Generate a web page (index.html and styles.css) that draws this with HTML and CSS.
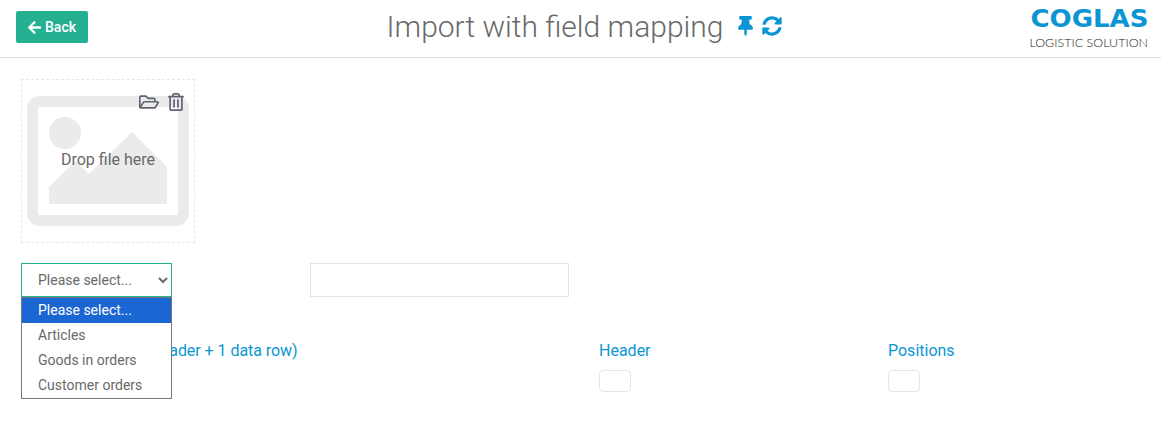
FILE: index.html
```html
<!DOCTYPE html>
<html lang="en">
<head>
    <meta charset="UTF-8">
    <meta name="viewport" content="width=device-width, initial-scale=1.0">
    <title>Import with field mapping</title>
    <link rel="stylesheet" href="styles.css">
</head>
<body>

<header class="topbar">
    <a class="btn-back" href="#">
        <svg class="icon-back" viewBox="0 0 448 512"><path fill="currentColor" d="M257.5 445.1l-22.2 22.2c-9.4 9.4-24.6 9.4-33.9 0L7 273c-9.4-9.4-9.4-24.6 0-33.9L201.4 44.7c9.4-9.4 24.6-9.4 33.9 0l22.2 22.2c9.5 9.5 9.3 25-.4 34.3L136.6 216H424c13.3 0 24 10.7 24 24v32c0 13.3-10.7 24-24 24H136.6l120.5 114.8c9.8 9.3 10 24.8.4 34.3z"/></svg>
        Back
    </a>

    <div class="title-wrap">
        <h1>Import with field mapping</h1>
        <svg class="icon-pin" viewBox="0 0 384 512"><path fill="currentColor" d="M298.028 214.267L285.793 96H328c13.255 0 24-10.745 24-24V24c0-13.255-10.745-24-24-24H56C42.745 0 32 10.745 32 24v48c0 13.255 10.745 24 24 24h42.207L85.972 214.267C37.465 236.82 0 277.261 0 328c0 13.255 10.745 24 24 24h136v104.007c0 1.242.289 2.467.845 3.578l24 48c2.941 5.882 11.364 5.893 14.311 0l24-48a8.008 8.008 0 0 0 .845-3.578V352h136c13.255 0 24-10.745 24-24-.001-51.183-37.983-91.42-85.973-113.733z"/></svg>
        <svg class="icon-sync" viewBox="0 0 512 512"><path fill="currentColor" d="M370.72 133.28C339.458 104.008 298.888 87.962 255.848 88c-77.458.068-144.328 53.178-162.791 126.85-1.344 5.363-6.122 9.15-11.651 9.15H24.103c-7.498 0-13.194-6.807-11.807-14.176C33.933 94.924 134.813 8 256 8c66.448 0 126.791 26.136 171.315 68.685L463.03 40.97C478.149 25.851 504 36.559 504 57.941V192c0 13.255-10.745 24-24 24H345.941c-21.382 0-32.09-25.851-16.971-40.971l41.75-41.749zM32 296h134.059c21.382 0 32.09 25.851 16.971 40.971l-41.75 41.75c31.262 29.273 71.835 45.319 114.876 45.28 77.418-.07 144.315-53.144 162.787-126.849 1.344-5.363 6.122-9.15 11.651-9.15h57.304c7.498 0 13.193 6.807 11.807 14.176C478.067 417.076 377.187 504 256 504c-66.448 0-126.791-26.136-171.315-68.685L48.97 471.03C33.851 486.149 8 475.441 8 454.059V320c0-13.255 10.745-24 24-24z"/></svg>
    </div>

    <div class="logo">
        <span class="logo-name">COGLAS</span>
        <span class="logo-sub">LOGISTIC SOLUTION</span>
    </div>
</header>

<main class="content">
    <div class="dropzone">
        <svg class="placeholder" viewBox="0 0 162 130">
            <rect x="5.5" y="5.5" width="151" height="119" rx="7" fill="none" stroke="#ebebeb" stroke-width="11"/>
            <circle cx="38" cy="37" r="16" fill="#ebebeb"/>
            <polygon points="22,91 48.5,64.5 62,78 105,36 140,71 140,108 22,108" fill="#ebebeb"/>
        </svg>
        <div class="drop-actions">
            <svg class="icon-folder" viewBox="0 0 576 512"><path fill="currentColor" d="M527.9 224H480v-48c0-26.5-21.5-48-48-48H272l-64-64H48C21.5 64 0 85.5 0 112v288c0 26.5 21.5 48 48 48h400c16.5 0 31.9-8.5 40.7-22.6l79.9-128c20-31.9-3-73.4-40.7-73.4zM48 118c0-3.3 2.7-6 6-6h134.1l64 64H426c3.3 0 6 2.7 6 6v42H152c-16.8 0-32.4 8.8-41.1 23.2L48 351.4zm400 282H72l77.2-128H528z"/></svg>
            <svg class="icon-trash" viewBox="0 0 448 512"><path fill="currentColor" d="M268 416h24a12 12 0 0 0 12-12V188a12 12 0 0 0-12-12h-24a12 12 0 0 0-12 12v216a12 12 0 0 0 12 12zM432 80h-82.41l-34-56.7A48 48 0 0 0 274.41 0H173.59a48 48 0 0 0-41.16 23.3L98.41 80H16A16 16 0 0 0 0 96v16a16 16 0 0 0 16 16h16v336a48 48 0 0 0 48 48h288a48 48 0 0 0 48-48V128h16a16 16 0 0 0 16-16V96a16 16 0 0 0-16-16zM171.84 50.91A6 6 0 0 1 177 48h94a6 6 0 0 1 5.15 2.91L293.61 80H154.39zM368 464H80V128h288zm-212-48h24a12 12 0 0 0 12-12V188a12 12 0 0 0-12-12h-24a12 12 0 0 0-12 12v216a12 12 0 0 0 12 12z"/></svg>
        </div>
        <span class="drop-text">Drop file here</span>
    </div>

    <div class="form-grid">
        <div class="select-wrap">
            <select class="type-select">
                <option>Please select...</option>
                <option>Articles</option>
                <option>Goods in orders</option>
                <option>Customer orders</option>
            </select>
            <ul class="select-list">
                <li class="active">Please select...</li>
                <li>Articles</li>
                <li>Goods in orders</li>
                <li>Customer orders</li>
            </ul>
        </div>
        <input class="name-input" type="text">
        <div class="spacer"></div>

        <div class="field wide">
            <span class="field-label sample-label">Example data file (header + 1 data row)</span>
        </div>
        <div class="field">
            <span class="field-label">Header</span>
            <span class="check-box"></span>
        </div>
        <div class="field">
            <span class="field-label">Positions</span>
            <span class="check-box"></span>
        </div>
    </div>
</main>

</body>
</html>
```

FILE: styles.css
```css
* {
    box-sizing: border-box;
}

body {
    font-family: Roboto, "Liberation Sans", sans-serif;
    margin: 0;
    min-height: 100vh;
    background-color: #ffffff;
    color: #696969;
}

.topbar {
    display: grid;
    grid-template-columns: 1fr auto 1fr;
    align-items: center;
    height: 58px;
    padding: 0 13px 3px 16px;
    border-bottom: 1px solid #dcdcdc;
}

.btn-back {
    display: inline-flex;
    align-items: center;
    justify-content: center;
    gap: 4px;
    width: 72px;
    height: 32px;
    background-color: #26b092;
    border-radius: 2px;
    color: #ffffff;
    font-size: 14px;
    font-weight: 500;
    text-decoration: none;
}

.icon-back {
    width: 13px;
    height: 15px;
}

.title-wrap {
    display: flex;
    align-items: center;
    margin: 0 0 2px 5px;
    color: #0b96d3;
}

h1 {
    margin: 0 15px 0 0;
    font-size: 30px;
    font-weight: 300;
    color: #696969;
}

.icon-pin {
    width: 15px;
    height: 20px;
    margin-right: 9px;
}

.icon-sync {
    width: 20px;
    height: 20px;
}

.logo {
    display: flex;
    flex-direction: column;
    align-items: flex-end;
    justify-self: end;
    width: 118px;
    margin-top: 1px;
}

.logo-name {
    font-family: "DejaVu Sans", sans-serif;
    font-size: 25px;
    line-height: 25px;
    font-weight: bold;
    color: #0b96d3;
    transform: scaleX(1.04);
    transform-origin: right center;
}

.logo-sub {
    margin-top: 5px;
    font-family: Lato, sans-serif;
    font-size: 12.5px;
    line-height: 14px;
    font-weight: 300;
    color: #222222;
    white-space: nowrap;
}

.content {
    padding: 21px 0 0 21px;
}

.dropzone {
    position: relative;
    width: 174px;
    height: 164px;
    border: 1px dashed #e6e6e6;
    padding: 16px 0 0 5px;
}

.placeholder {
    display: block;
    width: 162px;
    height: 130px;
}

.drop-actions {
    position: absolute;
    top: 13px;
    right: 10px;
    display: flex;
    align-items: center;
    gap: 9px;
    color: #5f6470;
}

.icon-folder {
    width: 20px;
    height: 18px;
}

.icon-trash {
    width: 16px;
    height: 18px;
}

.drop-text {
    position: absolute;
    top: 70px;
    left: 0;
    width: 100%;
    text-align: center;
    font-size: 16px;
    line-height: 19px;
}

.form-grid {
    display: grid;
    grid-template-columns: repeat(4, 289px);
    margin-top: 20px;
}

.select-wrap {
    position: relative;
}

.type-select {
    display: block;
    width: 151px;
    height: 34px;
    padding: 0 10px 0 12px;
    background-color: #ffffff;
    border: 1px solid #26b092;
    border-radius: 0;
    color: #696969;
    font-family: inherit;
    font-size: 14px;
}

.select-list {
    position: absolute;
    top: 34px;
    left: 0;
    z-index: 2;
    width: 151px;
    margin: 0;
    padding: 0;
    list-style: none;
    background-color: #ffffff;
    border: 1px solid #767676;
    font-size: 14px;
}

.select-list li {
    height: 25px;
    padding-left: 16px;
    line-height: 25px;
}

.select-list li.active {
    background-color: #1a66d2;
    color: #ffffff;
}

.name-input {
    width: 259px;
    height: 34px;
    border: 1px solid #e4e4e4;
    background-color: #ffffff;
}

.spacer {
    grid-column: span 2;
}

.field {
    display: flex;
    flex-direction: column;
    align-items: flex-start;
    gap: 10px;
    margin-top: 44px;
}

.wide {
    grid-column: span 2;
}

.field-label {
    font-size: 16px;
    line-height: 19px;
    color: #0b96d3;
}

.sample-label {
    letter-spacing: -0.05px;
}

.check-box {
    width: 32px;
    height: 22px;
    border: 1px solid #e6e6e6;
    border-radius: 4px;
}
```
